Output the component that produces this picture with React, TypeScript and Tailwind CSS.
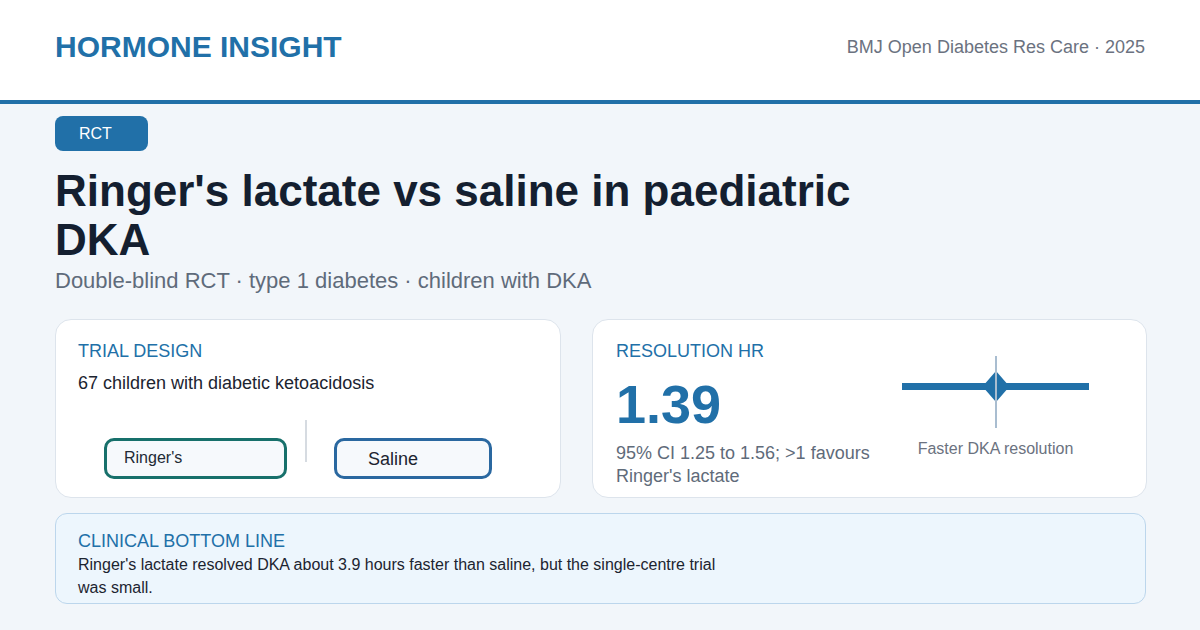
import React from 'react'

const font = { fontFamily: '"Liberation Sans", Arial, sans-serif' }

function ForestPlot() {
  return (
    <svg width="188" height="72" viewBox="0 0 188 72">
      <rect x="0" y="27" width="187" height="7" fill="#2170a8" />
      <polygon points="94,15 107.5,30.5 94,46 80.5,30.5" fill="#2170a8" />
      <line x1="94" y1="0" x2="94" y2="72" stroke="#a9bdd0" strokeWidth="2" />
    </svg>
  )
}

function App() {
  return (
    <div className="w-[1200px] h-[630px] bg-[#f2f6fa] overflow-hidden" style={font}>
      <header className="h-[104px] bg-white border-b-4 border-[#2170a8] flex items-center justify-between px-[55px] pb-[4px]">
        <h1 className="text-[30px] font-bold text-[#2170a8] leading-9 -mt-[2px]">HORMONE INSIGHT</h1>
        <span className="text-lg text-[#6b7280] -mt-[3px]">BMJ Open Diabetes Res Care · 2025</span>
      </header>

      <main className="px-[55px] pt-[12px]">
        <div className="inline-flex items-center h-[35px] w-[93px] pl-[24px] rounded-lg bg-[#2170a8] text-white text-base">
          RCT
        </div>

        <h2 className="mt-[16px] max-w-[860px] text-[44px] font-bold leading-[48.5px] text-[#141f30]">
          Ringer's lactate vs saline in paediatric DKA
        </h2>
        <p className="mt-[3px] text-[22px] leading-7 text-[#5f6b7a]">
          Double-blind RCT · type 1 diabetes · children with DKA
        </p>

        <div className="mt-[24px] grid grid-cols-[506px_555px] gap-[31px] h-[179px]">
          <section className="bg-white border-[1.5px] border-[#dde4ec] rounded-2xl pt-[20px] px-[22px]">
            <h3 className="text-lg leading-[23px] text-[#2170a8]">TRIAL DESIGN</h3>
            <p className="mt-[9px] text-lg leading-[23px] text-[#1c2430]">67 children with diabetic ketoacidosis</p>
            <div className="mt-[25px] flex items-start">
              <div className="mt-[18px] ml-[26px] w-[183px] h-[41px] rounded-[10px] border-[3px] border-[#17706b] bg-[#f6f9fc] flex items-center pl-[17px] pb-[2px] text-base text-[#222a35]">
                Ringer's
              </div>
              <div className="ml-[18px] w-[2px] h-[42px] bg-[#d6dbe1]" />
              <div className="mt-[18px] ml-[27px] w-[158px] h-[41px] rounded-[10px] border-[3px] border-[#2a68a0] bg-[#f6f9fc] flex items-center pl-[31px] text-lg text-[#1c2430]">
                Saline
              </div>
            </div>
          </section>

          <section className="bg-white border-[1.5px] border-[#dde4ec] rounded-2xl pt-[20px] px-[23px] flex">
            <div className="w-[270px]">
              <h3 className="text-lg leading-[23px] text-[#2170a8]">RESOLUTION HR</h3>
              <div className="mt-[13px] text-[54px] font-bold leading-[56px] text-[#2170a8]">1.39</div>
              <p className="mt-[10px] text-lg leading-[23px] text-[#5f6b7a]">
                95% CI 1.25 to 1.56; &gt;1 favours Ringer's lactate
              </p>
            </div>
            <div className="flex-1 flex flex-col items-center pt-[16px] pr-[18px]">
              <ForestPlot />
              <span className="mt-[9px] text-base leading-6 text-[#6b7280]">Faster DKA resolution</span>
            </div>
          </section>
        </div>

        <section className="mt-[15px] w-[1091px] h-[91px] rounded-xl border-[1.5px] border-[#bcd6ec] bg-[#edf6fd] pt-[16px] px-[22px]">
          <h3 className="text-lg leading-[23px] text-[#2170a8]">CLINICAL BOTTOM LINE</h3>
          <p className="max-w-[660px] text-base leading-[23px] text-[#1c2430]">
            Ringer's lactate resolved DKA about 3.9 hours faster than saline, but the single-centre trial was small.
          </p>
        </section>
      </main>
    </div>
  )
}

export default App
